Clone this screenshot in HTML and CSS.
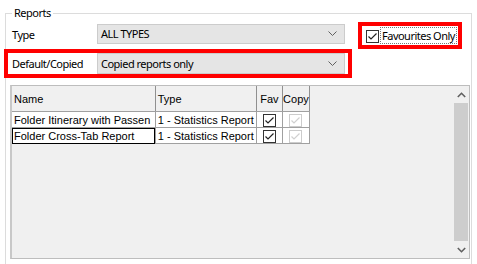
FILE: index.html
```html
<!DOCTYPE html>
<html>
<head>
<meta charset="utf-8">
<link rel="stylesheet" href="styles.css">
</head>
<body>
<fieldset class="group">
  <legend class="legend">Reports</legend>
  <div class="row1">
    <span class="lbl lbl-type">Type</span>
    <div class="combo combo1"><span class="combo-text">ALL TYPES</span><svg class="chev" width="9" height="6" viewBox="0 0 9 6"><path d="M0.5 0.5 L4.5 4.5 L8.5 0.5" fill="none" stroke="#606060" stroke-width="1"/></svg></div>
    <div class="redbox favbox">
      <span class="cb"><svg width="11" height="11" viewBox="0 0 11 11"><path d="M1.5 5.5 L4 8 L9.5 2.5" fill="none" stroke="#222" stroke-width="1.2"/></svg></span>
      <span class="fav-text">Favourites Only</span>
    </div>
  </div>
  <div class="redbox row2">
    <span class="lbl lbl-dc">Default/Copied</span>
    <div class="combo combo2"><span class="combo-text">Copied reports only</span><svg class="chev" width="9" height="6" viewBox="0 0 9 6"><path d="M0.5 0.5 L4.5 4.5 L8.5 0.5" fill="none" stroke="#606060" stroke-width="1"/></svg></div>
  </div>
  <div class="grid">
    <div class="grid-body">
      <table class="tbl">
        <colgroup><col class="c-name"><col class="c-type"><col class="c-fav"><col class="c-copy"></colgroup>
        <thead>
          <tr class="hdr"><th>Name</th><th>Type</th><th class="ctr">Fav</th><th class="ctr">Copy</th></tr>
        </thead>
        <tbody>
          <tr class="r1"><td>Folder Itinerary with Passen</td><td>1 - Statistics Report</td><td class="ctr"><span class="gcb"><svg width="11" height="11" viewBox="0 0 11 11"><path d="M1.5 5.5 L4 8 L9.5 2.5" fill="none" stroke="#222" stroke-width="1.2"/></svg></span></td><td class="ctr"><span class="gcb dis"><svg width="11" height="11" viewBox="0 0 11 11"><path d="M1.5 5.5 L4 8 L9.5 2.5" fill="none" stroke="#d0d0d0" stroke-width="1.2"/></svg></span></td></tr>
          <tr class="r2"><td class="focus">Folder Cross-Tab Report</td><td>1 - Statistics Report</td><td class="ctr"><span class="gcb"><svg width="11" height="11" viewBox="0 0 11 11"><path d="M1.5 5.5 L4 8 L9.5 2.5" fill="none" stroke="#222" stroke-width="1.2"/></svg></span></td><td class="ctr"><span class="gcb dis"><svg width="11" height="11" viewBox="0 0 11 11"><path d="M1.5 5.5 L4 8 L9.5 2.5" fill="none" stroke="#d0d0d0" stroke-width="1.2"/></svg></span></td></tr>
        </tbody>
      </table>
    </div>
    <div class="vscroll">
      <div class="sb-btn"><svg width="9" height="6" viewBox="0 0 9 6"><path d="M0.8 5 L4.5 1.3 L8.2 5" fill="none" stroke="#606060" stroke-width="1.6"/></svg></div>
      <div class="sb-track"><div class="sb-thumb"></div></div>
      <div class="sb-btn"><svg width="9" height="6" viewBox="0 0 9 6"><path d="M0.8 1 L4.5 4.7 L8.2 1" fill="none" stroke="#606060" stroke-width="1.6"/></svg></div>
    </div>
  </div>
</fieldset>
</body>
</html>
```

FILE: styles.css
```css
html, body {
  margin: 0;
  padding: 0;
  background: #ffffff;
  width: 477px;
  height: 264px;
  overflow: hidden;
}

body {
  font-family: "Noto Sans", "Open Sans", sans-serif;
  font-size: 11px;
  letter-spacing: -0.5px;
  color: #000;
}

.group {
  margin: 5px 0 0 5px;
  padding: 0;
  width: 467px;
  height: 259px;
  border: 1px solid #dcdcdc;
  border-bottom: 0;
  box-sizing: border-box;
  min-width: 0;
}

.legend {
  padding: 0 2px;
  margin-left: 6px;
  line-height: 16px;
  color: #000;
}

.lbl {
  line-height: 16px;
  white-space: nowrap;
}

.row1 {
  display: flex;
  align-items: flex-start;
  height: 27px;
  margin-top: 1px;
}

.lbl-type {
  width: 85px;
  padding-left: 6px;
  margin-top: 5px;
}

.combo {
  box-sizing: border-box;
  width: 248px;
  background: #e5e5e5;
  border: 1px solid #cccccc;
  display: flex;
  align-items: center;
  justify-content: space-between;
  padding: 0 7px 0 3px;
}

.combo1 {
  height: 20px;
  margin-top: 2px;
}

.combo2 {
  height: 21px;
}

.combo-text {
  line-height: 16px;
}

.chev {
  display: block;
}

.redbox {
  border: 4px solid #ff0000;
  box-sizing: border-box;
}

.favbox {
  width: 104px;
  height: 27px;
  margin-left: 13px;
  display: flex;
  align-items: center;
  padding-left: 4px;
}

.cb {
  width: 13px;
  height: 13px;
  box-sizing: border-box;
  border: 1px solid #333333;
  background: #fff;
  display: flex;
  align-items: center;
  justify-content: center;
  margin-top: 1px;
}

.fav-text {
  margin-left: 2px;
  line-height: 15px;
  padding: 0 1px;
  outline: 1px dotted #777;
  outline-offset: 0;
  white-space: nowrap;
}

.row2 {
  margin-left: -2px;
  width: 348px;
  height: 29px;
  display: flex;
  align-items: center;
}

.lbl-dc {
  padding-left: 4px;
  box-sizing: border-box;
  width: 89px;
}

.grid {
  margin: 7px 0 0 4px;
  width: 460px;
  height: 174px;
  box-sizing: border-box;
  border: 1px solid #bdbdbd;
  border-left: 2px solid #c8c8c8;
  background: #f0f0f0;
  display: flex;
  letter-spacing: 0;
}

.grid-body {
  flex: 1;
}

.tbl {
  border-collapse: collapse;
  font-family: "Liberation Sans", Arial, sans-serif;
  font-size: 11px;
  table-layout: fixed;
  width: 298px;
}

.c-name { width: 143px; }
.c-type { width: 101px; }
.c-fav { width: 26px; }
.c-copy { width: 27px; }

.tbl th, .tbl td {
  border: 1px solid #a0a0a0;
  padding: 0 0 0 2px;
  text-align: left;
  white-space: nowrap;
  overflow: hidden;
  font-weight: normal;
}

.tbl thead th {
  border-top: none;
  border-left-color: #f0f0f0;
  border-right-color: #909090;
  height: 25px;
  background: #f0f0f0;
  vertical-align: middle;
}

.tbl thead th:first-child {
  border-left: none;
}

.tbl td {
  background: #ffffff;
  height: 15px;
  line-height: 14px;
}

.tbl td:first-child {
  border-left: none;
}

.tbl .ctr {
  text-align: center;
  padding: 0;
}

.tbl td.focus {
  outline: 1px solid #000;
  outline-offset: -1px;
}

.gcb {
  display: inline-flex;
  width: 13px;
  height: 13px;
  box-sizing: border-box;
  border: 1px solid #333;
  background: #fff;
  align-items: center;
  justify-content: center;
  vertical-align: middle;
}

.gcb.dis {
  border-color: #cccccc;
}

.vscroll {
  width: 16px;
  display: flex;
  flex-direction: column;
  background: #f0f0f0;
}

.sb-btn {
  height: 17px;
  display: flex;
  align-items: center;
  justify-content: center;
}

.sb-track {
  flex: 1;
  padding: 0 1px;
  display: flex;
}

.sb-thumb {
  flex: 1;
  background: #cdcdcd;
}
```
